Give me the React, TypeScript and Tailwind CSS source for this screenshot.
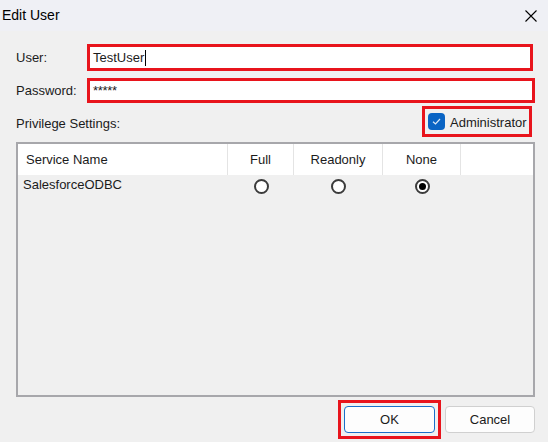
import React from 'react';

const cols = [
  { name: 'Full', w: 'w-[66px]' },
  { name: 'Readonly', w: 'w-[89px]' },
  { name: 'None', w: 'w-[78px]' },
];

function Radio({ checked }: { checked?: boolean }) {
  return (
    <span className="flex h-[15px] w-[15px] items-center justify-center rounded-full border-2 border-[#3c3c3c] bg-white">
      {checked && <span className="h-[7px] w-[7px] rounded-full bg-black" />}
    </span>
  );
}

export default function App() {
  return (
    <div
      className="flex h-[442px] w-[548px] flex-col bg-[#f0f0f0] text-[13px] text-[#1b1b1b]"
      style={{ fontFamily: '"Liberation Sans", Arial, sans-serif' }}
    >
      {/* title bar */}
      <div className="flex h-[31px] items-center justify-between bg-[#eff0f5] pl-[2px] pr-[11px]">
        <span className="text-[14px] text-black">Edit User</span>
        <svg width="12" height="12" viewBox="0 0 12 12" className="text-black">
          <path d="M0.5 0.5 L11.5 11.5 M11.5 0.5 L0.5 11.5" stroke="currentColor" strokeWidth="1.1" />
        </svg>
      </div>

      <div className="flex flex-1 flex-col pl-[16px] pr-[13px]">
        {/* user */}
        <div className="mt-[13px] flex h-[27px] items-center">
          <span className="w-[71px]">User:</span>
          <div className="flex h-[27px] w-[446px] items-center border-[3px] border-[#e8141c] bg-white pl-[3px]">
            <span>TestUser</span>
            <span className="ml-[1px] h-[16px] w-[1px] bg-black" />
          </div>
        </div>

        {/* password */}
        <div className="mt-[7px] flex h-[25px] items-center">
          <span className="w-[71px]">Password:</span>
          <div className="flex h-[25px] w-[448px] items-center border-[3px] border-[#e8141c] bg-white pl-[3px]">
            <span className="text-[13px] tracking-[-0.3px]">*****</span>
          </div>
        </div>

        {/* privilege */}
        <div className="mt-[3px] flex h-[31px] items-center justify-between">
          <span className="pt-[4px]">Privilege Settings:</span>
          <div className="mr-[3px] flex h-[31px] w-[110px] items-center border-[3px] border-[#e8141c] pl-[3px]">
            <span className="flex h-[17px] w-[17px] items-center justify-center rounded-[4px] bg-[#0a64c4]">
              <svg width="11" height="11" viewBox="0 0 11 11">
                <path d="M2 5.8 L4.5 8 L9 3" fill="none" stroke="#dce9f7" strokeWidth="1.2" />
              </svg>
            </span>
            <span className="ml-[5px] pt-[3px]">Administrator</span>
          </div>
        </div>

        {/* grid */}
        <div className="mt-[5px] flex h-[255px] flex-col border-2 border-[#a7a7ab]">
          <div className="flex h-[31px] bg-white">
            <div className="flex w-[210px] items-center border-r border-[#e4e4e4] pl-[8px]">Service Name</div>
            {cols.map((c) => (
              <div key={c.name} className={`${c.w} flex items-center justify-center border-r border-[#e4e4e4]`}>
                {c.name}
              </div>
            ))}
            <div className="flex-1" />
          </div>
          <div className="flex h-[20px] items-center">
            <div className="w-[210px] pl-[5px]">SalesforceODBC</div>
            <div className="flex w-[66px] justify-center pt-[3px]"><Radio /></div>
            <div className="flex w-[89px] justify-center pt-[3px]"><Radio /></div>
            <div className="flex w-[78px] justify-center pt-[3px]"><Radio checked /></div>
          </div>
        </div>

        {/* buttons */}
        <div className="mt-[3px] flex justify-end gap-[4px]">
          <div className="border-[3px] border-[#e8141c] p-[3px]">
            <button className="flex h-[27px] w-[91px] items-center justify-center rounded-[4px] border border-[#1a6fc9] bg-[#fdfdfd] text-[13px]">
              OK
            </button>
          </div>
          <button className="mt-[6px] flex h-[27px] w-[90px] items-center justify-center rounded-[4px] border border-[#d0d0d0] bg-[#fdfdfd] text-[13px]">
            Cancel
          </button>
        </div>
      </div>
    </div>
  );
}
